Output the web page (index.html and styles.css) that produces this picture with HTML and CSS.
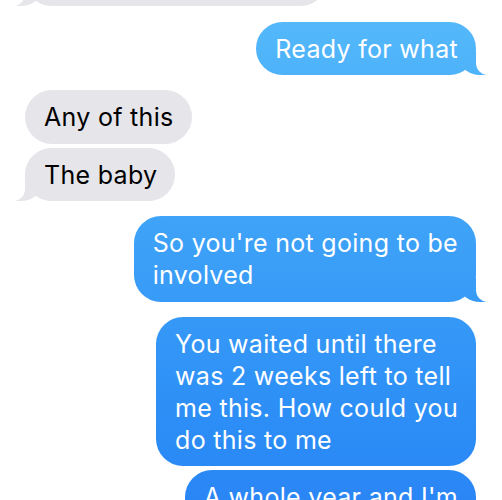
FILE: index.html
```html
<!DOCTYPE html>
<html lang="en">
<head>
    <meta charset="UTF-8">
    <meta name="viewport" content="width=device-width, initial-scale=1.0">
    <title>Messages</title>
    <link rel="stylesheet" href="styles.css">
</head>
<body>

<div class="thread">
    <div class="bubble received tail cut"></div>

    <div class="bubble sent tail">Ready for what</div>

    <div class="bubble received">Any of this</div>
    <div class="bubble received tail">The baby</div>

    <div class="bubble sent tail">So you're not going to be<br>involved</div>

    <div class="bubble sent">You waited until there<br>was 2 weeks left to tell<br>me this. How could you<br>do this to me</div>
    <div class="bubble sent">A whole year and I'm<br>just finding out now</div>
</div>

</body>
</html>
```

FILE: styles.css
```css
* {
    margin: 0;
    padding: 0;
    box-sizing: border-box;
}

body {
    background: #fff;
    font-family: 'Inter', 'Helvetica Neue', sans-serif;
    height: 500px;
    overflow: hidden;
}

.thread {
    display: flex;
    flex-direction: column;
    gap: 4px;
    padding: 0 26px 0 25px;
}

.bubble {
    position: relative;
    padding: 11px 18px 10.5px 19px;
    border-radius: 27px;
    font-size: 25px;
    line-height: 32px;
    letter-spacing: 0.3px;
    white-space: nowrap;
}

.received {
    align-self: flex-start;
    background: #e5e5ea;
    color: #000;
}

.sent {
    align-self: flex-end;
    color: #fff;
    background: linear-gradient(180deg, #56bafb 0px, #3fa3f8 220px, #2c8ef6 420px, #2a86f5 500px) fixed;
}

.tail {
    margin-bottom: 11px;
}

.cut {
    width: 302px;
    height: 53px;
    margin-top: -47px;
    margin-bottom: 11.5px;
}

/* tails */
.tail::before,
.tail::after {
    content: "";
    position: absolute;
    bottom: 0;
    height: 24px;
}

.sent.tail::before {
    right: -10px;
    width: 26px;
    background: inherit;
    border-bottom-left-radius: 20px 16px;
}

.sent.tail::after {
    right: -30px;
    width: 30px;
    background: #fff;
    border-bottom-left-radius: 12px;
}

.received.tail::before {
    left: -10px;
    width: 26px;
    background: #e5e5ea;
    border-bottom-right-radius: 20px 16px;
}

.received.tail::after {
    left: -30px;
    width: 30px;
    background: #fff;
    border-bottom-right-radius: 12px;
}
```
